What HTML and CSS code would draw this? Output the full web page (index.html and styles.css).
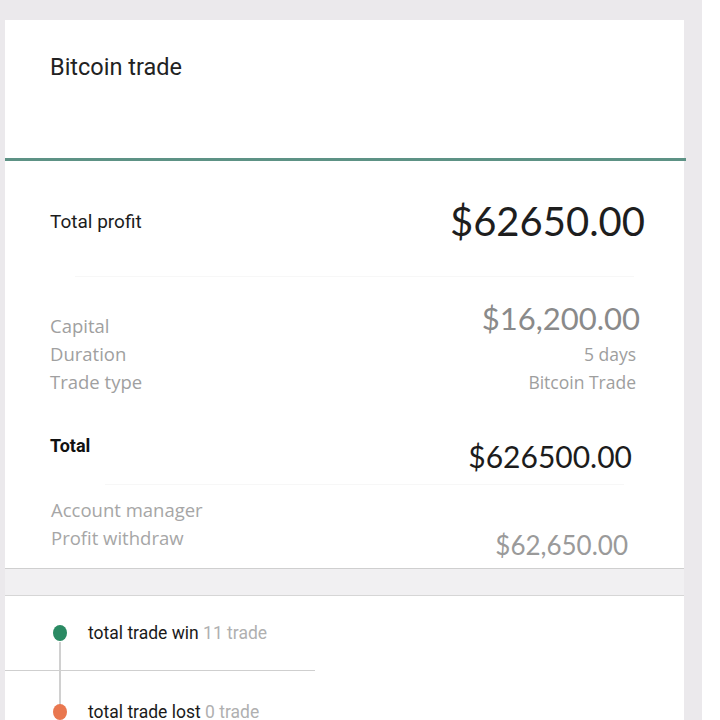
FILE: index.html
```html
<!DOCTYPE html>
<html>
<head>
<meta charset="utf-8">
<link rel="stylesheet" href="styles.css">
</head>
<body>
<div class="frame">
  <div class="card">
    <div class="header">Bitcoin trade</div>
    <div class="accent"></div>
    <div class="profit-row">
      <div class="label-dark">Total profit</div>
      <div class="big-amount">$62650.00</div>
    </div>
    <div class="faint-line"></div>
    <div class="details">
      <div class="detail-labels">
        <div>Capital</div>
        <div>Duration</div>
        <div>Trade type</div>
      </div>
      <div class="detail-values">
        <div class="capital">$16,200.00</div>
        <div>5 days</div>
        <div>Bitcoin Trade</div>
      </div>
    </div>
    <div class="total-row">
      <div class="label-bold">Total</div>
      <div class="total-amount">$626500.00</div>
    </div>
    <div class="faint-line short"></div>
    <div class="withdraw">
      <div class="detail-labels">
        <div>Account manager</div>
        <div>Profit withdraw</div>
      </div>
      <div class="withdraw-amount">$62,650.00</div>
    </div>
    <div class="band"></div>
    <div class="timeline">
      <div class="tl-item">
        <span class="dot green"></span>
        <span class="tl-text">total trade win <span class="muted">11 trade</span></span>
      </div>
      <div class="tl-sep"></div>
      <div class="tl-item lost">
        <span class="dot orange"></span>
        <span class="tl-text">total trade lost <span class="muted">0 trade</span></span>
      </div>
      <div class="tl-line"></div>
    </div>
  </div>
</div>
</body>
</html>
```
FILE: styles.css
```css
html, body {
  margin: 0;
  padding: 0;
  background: #ffffff;
  height: 720px;
  overflow: hidden;
}
.frame {
  width: 702px;
  height: 720px;
  background: #ebe9ec;
  padding: 20px 18px 0 5px;
  box-sizing: border-box;
}
.card {
  background: #ffffff;
  height: 700px;
  position: relative;
  font-family: Roboto, "Liberation Sans", Arial, sans-serif;
}
.header {
  height: 138px;
  box-sizing: border-box;
  padding: 33px 0 0 45px;
  font-size: 23.5px;
  color: #222;
}
.accent {
  height: 3px;
  background: #5d9285;
  margin-right: -2px;
}
.profit-row {
  display: flex;
  justify-content: space-between;
  align-items: center;
  padding: 38px 39px 0 45px;
  height: 44px;
}
.label-dark {
  font-size: 19px;
  color: #1c1c1c;
}
.big-amount {
  font-family: Lato, "Open Sans", sans-serif;
  font-size: 40px;
  color: #1e1e1e;
}
.faint-line {
  height: 1px;
  background: #f7f7f7;
  margin: 33px 50px 0 70px;
}
.faint-line.short {
  margin: 10px 60px 0 100px;
}
.details {
  display: flex;
  justify-content: space-between;
  padding: 35px 48px 0 45px;
}
.detail-labels {
  font-family: "Open Sans", Lato, sans-serif;
  font-size: 18.5px;
  line-height: 28px;
  color: #a0a0a0;
}
.detail-values {
  font-family: "Open Sans", Lato, sans-serif;
  text-align: right;
  color: #9e9e9e;
  font-size: 17.5px;
  line-height: 28px;
}
.detail-values .capital {
  font-family: Lato, "Open Sans", sans-serif;
  font-size: 31px;
  color: #8a8a8a;
  line-height: 36px;
  margin-top: -12px;
  margin-bottom: 4px;
  margin-right: -4px;
}
.total-row {
  display: flex;
  justify-content: space-between;
  padding: 34px 52px 0 45px;
}
.label-bold {
  font-size: 18px;
  font-weight: bold;
  color: #111;
  padding-top: 5px;
}
.total-amount {
  font-family: Lato, "Open Sans", sans-serif;
  font-size: 30px;
  line-height: 36px;
  color: #1c1c1c;
  padding-top: 7.5px;
}
.withdraw {
  display: flex;
  justify-content: space-between;
  align-items: flex-end;
  padding: 11px 56px 0 46px;
}
.withdraw .detail-labels {
  color: #a6a6a6;
}
.withdraw-amount {
  font-family: Lato, "Open Sans", sans-serif;
  font-size: 26px;
  line-height: 30px;
  color: #9a9a9a;
  margin-bottom: -8px;
}
.band {
  margin-top: 16px;
  height: 26px;
  background: #f1f0f2;
  border-top: 1px solid #cfcfcf;
  border-bottom: 1px solid #d6d6d6;
}
.timeline {
  position: relative;
  padding-top: 26px;
}
.tl-item {
  display: flex;
  align-items: center;
  padding-left: 48px;
  height: 22px;
  position: relative;
  z-index: 1;
}
.tl-item.lost {
  margin-top: 30px;
}
.dot {
  width: 14px;
  height: 16px;
  border-radius: 50%;
  margin-right: 21px;
}
.dot.green { background: #2a8a63; }
.dot.orange { background: #e9774f; }
.tl-text {
  font-size: 17.5px;
  color: #1a1a1a;
}
.muted { color: #b0b0b0; }
.tl-sep {
  height: 1px;
  background: #cfcfcf;
  width: 310px;
  margin-top: 26px;
}
.tl-line {
  position: absolute;
  left: 54px;
  top: 46px;
  width: 2px;
  height: 70px;
  background: #d0d0d0;
}
```
